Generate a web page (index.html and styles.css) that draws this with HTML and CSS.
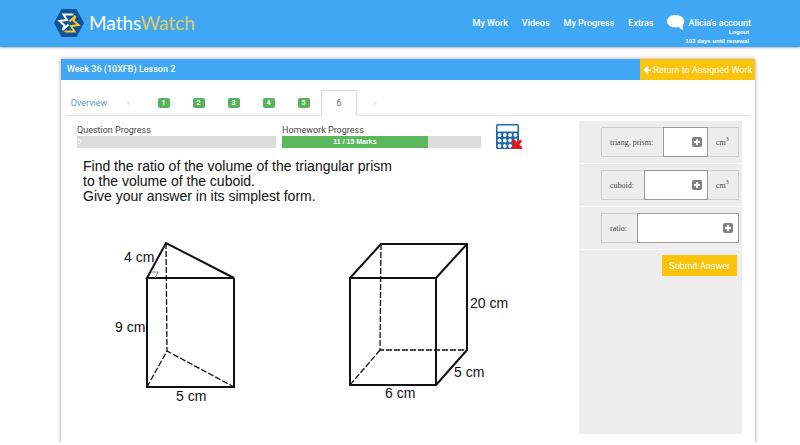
FILE: index.html
```html
<!DOCTYPE html>
<html lang="en">
<head>
<meta charset="UTF-8" />
<meta name="viewport" content="width=device-width, initial-scale=1" />
<title>MathsWatch</title>
<link rel="stylesheet" href="styles.css">
</head>
<body>

<header class="topbar">
  <a href="#" class="logo">
    <svg width="30" height="28" viewBox="0 0 30 28" aria-hidden="true">
      <path d="M7.500 0h15L30 14l-7.500 14h-15L0 14z" fill="#0f5499" />
      <path d="M19.500 5.500H9.500l3.500 5.500-7.500 1 5 4.500-2 4.500 6-5.500" fill="none" stroke="#fff" stroke-width="2" />
      <path d="M10.500 22.500h10l-3.500-5.500 7.500-1-5-4.500 2-4.500-6 5.500" fill="none" stroke="#f6c62c" stroke-width="2" />
    </svg>
    <span class="logo-text">Maths<span>Watch</span></span>
  </a>
  <nav>
    <a href="#">My Work</a>
    <a href="#">Videos</a>
    <a href="#">My Progress</a>
    <a href="#">Extras</a>
    <div class="account">
      <a href="#" class="account-name">
        <svg width="18" height="15" viewBox="0 0 18 15" aria-hidden="true">
          <path d="M8.500 0C3.800 0 0 2.700 0 6.200s3.800 6.200 8.500 6.200c1.300 0 2.500-.2 3.500-.5 1 1.500 2.800 2.700 4.700 2.700-.8-1-1.200-2.700-1-4.300 1-1.100 1.500-2.500 1.500-4C17.200 2.700 13.300 0 8.500 0z" fill="#fff" />
        </svg>
        Alicia's account
      </a>
      <a href="#" class="small">Logout</a>
      <span class="small">103 days until renewal</span>
    </div>
  </nav>
</header>

<div class="card">
  <div class="card-header">
    <h1>Week 36 (10XFB) Lesson 2</h1>
    <a href="#" class="return">
      <svg width="7" height="8" viewBox="0 0 7 8" aria-hidden="true">
        <path d="M4 .5L.800 4 4 7.500M1 4h6" fill="none" stroke="#fff" stroke-width="2" />
      </svg>
      Return to Assigned Work
    </a>
  </div>

  <div class="tabs">
    <a href="#" class="overview">Overview</a>
    <a href="#" class="arrow">«</a>
    <a href="#"><span class="badge">1</span></a>
    <a href="#"><span class="badge">2</span></a>
    <a href="#"><span class="badge">3</span></a>
    <a href="#"><span class="badge">4</span></a>
    <a href="#"><span class="badge">5</span></a>
    <a href="#" class="active">6</a>
    <a href="#" class="arrow">»</a>
  </div>

  <div class="content">
    <main>
      <div class="progress-row">
        <div class="progress">
          <div class="progress-label">Question Progress</div>
          <div class="bar">0</div>
        </div>
        <div class="progress">
          <div class="progress-label">Homework Progress</div>
          <div class="bar"><div class="fill" style="width: 73.3%">11 / 15 Marks</div></div>
        </div>
        <div class="calculator">
          <svg width="27" height="26" viewBox="0 0 27 26" role="img" aria-label="Calculator not allowed">
            <rect x="0" y="0" width="23" height="25" rx="1.500" fill="#2069ad" />
            <rect x="1.500" y="1.500" width="20" height="6" fill="#fff" />
            <g fill="#fff">
              <circle cx="3.500" cy="11" r="1.900" /><circle cx="8.800" cy="11" r="1.900" /><circle cx="14.100" cy="11" r="1.900" /><circle cx="19.400" cy="11" r="1.900" />
              <circle cx="3.500" cy="16.500" r="1.900" /><circle cx="8.800" cy="16.500" r="1.900" /><circle cx="14.100" cy="16.500" r="1.900" /><circle cx="19.400" cy="16.500" r="1.900" />
              <circle cx="3.500" cy="22" r="1.900" /><circle cx="8.800" cy="22" r="1.900" /><circle cx="14.100" cy="22" r="1.900" />
            </g>
            <path d="M15 17l3-2 3 3 3.500-2.500 1.500 2-2.500 3 3 3-1 1.500h-4l-2-1-3 1-1.500-1.500 2.500-3z" fill="#e3151b" />
          </svg>
        </div>
      </div>

      <p class="question">Find the ratio of the volume of the triangular prism<br>
        to the volume of the cuboid.<br>
        Give your answer in its simplest form.</p>

      <svg class="figure" width="460" height="200" viewBox="0 0 460 200">
        <!-- triangular prism -->
        <path d="M70 70L89 35 157 70zV179H157V70" class="edge" />
        <path d="M89 35L90 143M70 179L90 143 157 179" class="hidden" />
        <path d="M74 64h7l-3 6" class="angle" />
        <text x="47" y="54">4 cm</text>
        <text x="38" y="124">9 cm</text>
        <text x="99" y="193">5 cm</text>
        <!-- cuboid -->
        <path d="M273 70H359V177H273zL304 36H390V142L359 177M359 70L390 36" class="edge" />
        <path d="M304 36L303 142H390M303 142L273 177" class="hidden" />
        <text x="393" y="100">20 cm</text>
        <text x="377" y="169">5 cm</text>
        <text x="308" y="190">6 cm</text>
      </svg>
    </main>

    <form class="answers">
      <div class="answer-row">
        <div class="answer">
          <label for="prism">triang. prism:</label>
          <div class="field">
            <input type="text" id="prism" />
            <button type="button" aria-label="Open keypad for prism">
              <svg width="10" height="10" viewBox="0 0 10 10"><rect width="10" height="10" rx="2" fill="#808080" /><path d="M5 2v6M2 5h6" stroke="#fff" stroke-width="2" /></svg>
            </button>
          </div>
          <span class="unit">cm<sup>3</sup></span>
        </div>
      </div>
      <div class="answer-row">
        <div class="answer">
          <label for="cuboid">cuboid:</label>
          <div class="field">
            <input type="text" id="cuboid" />
            <button type="button" aria-label="Open keypad for cuboid">
              <svg width="10" height="10" viewBox="0 0 10 10"><rect width="10" height="10" rx="2" fill="#808080" /><path d="M5 2v6M2 5h6" stroke="#fff" stroke-width="2" /></svg>
            </button>
          </div>
          <span class="unit">cm<sup>3</sup></span>
        </div>
      </div>
      <div class="answer-row">
        <div class="answer">
          <label for="ratio">ratio:</label>
          <div class="field">
            <input type="text" id="ratio" />
            <button type="button" aria-label="Open keypad for ratio">
              <svg width="10" height="10" viewBox="0 0 10 10"><rect width="10" height="10" rx="2" fill="#808080" /><path d="M5 2v6M2 5h6" stroke="#fff" stroke-width="2" /></svg>
            </button>
          </div>
        </div>
      </div>
      <button type="submit" class="submit">Submit Answer</button>
    </form>
  </div>
</div>

</body>
</html>
```
FILE: styles.css
```css
* { box-sizing: border-box; }
body { margin: 0; background: #fff; font-family: Roboto, Arial, sans-serif; font-size: 9px; line-height: 12px; color: #444; }
a { color: inherit; text-decoration: none; }
svg { display: block; }

/* Top bar */
.topbar { display: flex; justify-content: space-between; align-items: flex-start; height: 47px; padding: 0 49px 0 54px; background: #40a7f5; color: #fff; box-shadow: 0 1px 2px rgba(0,0,0,0.3); }
.logo { display: flex; align-items: center; gap: 5px; padding-top: 9px; }
.logo-text { font-family: Lato, sans-serif; font-size: 19px; line-height: 28px; }
.logo-text span { color: #e3cb5c; }
nav { display: flex; gap: 14px; padding-top: 17px; font-weight: 500; }
.account { display: flex; flex-direction: column; align-items: flex-end; }
.account-name { display: flex; align-items: center; gap: 3px; height: 11px; }
.small { padding-right: 2px; font-family: "Liberation Sans", Arial, sans-serif; font-size: 6px; font-weight: bold; line-height: 9px; }

/* Card */
.card { margin: 12px 45px 0 61px; background: #fff; box-shadow: 0 0 4px rgba(0,0,0,0.4); }
.card-header { display: flex; justify-content: space-between; height: 21px; background: #40a7f5; color: #fff; }
.card-header h1 { margin: 0; padding-left: 6px; font-size: 9px; font-weight: 500; line-height: 21px; }
.return { display: flex; align-items: center; gap: 2px; padding: 0 3px 0 4px; background: #fbc30b; }

.tabs { display: flex; margin: 10px 6px 0; border-bottom: 1px solid #ddd; }
.tabs a { display: flex; justify-content: center; align-items: center; width: 35px; height: 26px; margin-bottom: -1px; }
.tabs .overview { width: 44px; color: #5a9bce; }
.tabs .arrow { color: #ddd; }
.tabs .active { width: 36px; border: 1px solid #ddd; border-bottom-color: #fff; color: #666; }
.badge { width: 12px; height: 10px; border-radius: 2px; background: #56b35a; color: #fff; font-size: 7px; font-weight: bold; line-height: 10px; text-align: center; }

.content { display: flex; padding: 5px 13px 9px 16px; }
main { flex: 1; }

/* Progress bars */
.progress-row { display: flex; gap: 6px; }
.progress { flex: 1; padding-top: 3px; }
.bar { height: 12px; background: #dcdcdc; color: #fff; font-family: "Liberation Sans", Arial, sans-serif; font-size: 7px; line-height: 12px; }
.fill { height: 100%; background: #5cb85c; font-weight: bold; text-align: center; }
.calculator { width: 92px; padding: 3px 0 0 9px; }

.question { margin: 9px 6px 0; color: #111; font-family: "Liberation Sans", Arial, sans-serif; font-size: 14px; line-height: 15px; }
.figure { margin-top: 4px; font-family: "Liberation Sans", Arial, sans-serif; font-size: 14px; fill: #111; }
.edge { fill: none; stroke: #111; stroke-width: 2; }
.hidden { fill: none; stroke: #111; stroke-width: 1.3; stroke-dasharray: 6 2; }
.angle { fill: none; stroke: #888; stroke-width: 1; }

/* Answers */
.answers { display: flex; flex-direction: column; width: 163px; min-height: 313px; background: #ededed; }
.answer-row { padding: 6px 3px 6px 22px; border-bottom: 1px solid #fafafa; }
.answer { display: flex; height: 30px; border: 1px solid #ccc; font-family: "Liberation Serif", serif; font-size: 8px; line-height: 30px; }
.answer label { padding: 0 11px 0 8px; }
.field { display: flex; flex: 1; align-items: center; margin: -1px; padding-right: 5px; border: 1px solid #999; background: #fff; }
.field input { flex: 1; width: 0; min-width: 0; height: 100%; padding: 0 4px; border: 0; background: none; font: inherit; }
.field button { padding: 0; border: 0; background: none; }
.unit { width: 31px; padding-left: 9px; }
.unit sup { font-size: 6px; line-height: 0; }
.submit { align-self: flex-end; height: 21px; margin: 5px 5px 0 0; padding: 0 7px; border: 0; background: #fbc30b; color: #fff; font: inherit; }
```
